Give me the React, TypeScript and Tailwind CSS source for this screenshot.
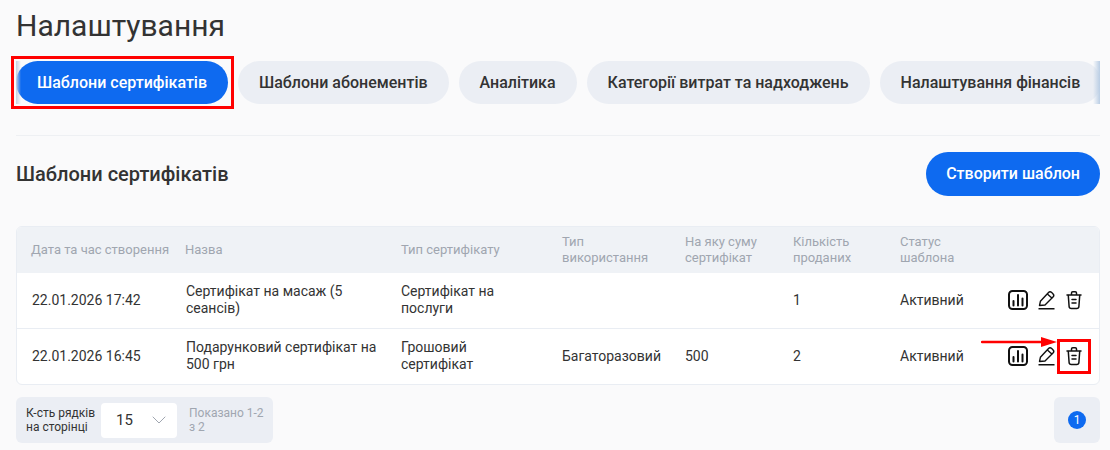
import { ChevronDown } from "lucide-react";

const TABS = [
  "Шаблони сертифікатів",
  "Шаблони абонементів",
  "Аналітика",
  "Категорії витрат та надходжень",
  "Налаштування фінансів",
];

const COLS = [
  { title: "Дата та час створення", w: "w-[154px]", nowrap: true },
  { title: "Назва", w: "w-[216px]" },
  { title: "Тип сертифікату", w: "w-[161px]" },
  { title: "Тип використання", w: "w-[123px]" },
  { title: "На яку суму сертифікат", w: "w-[108px]" },
  { title: "Кількість проданих", w: "w-[107px]" },
  { title: "Статус шаблона", w: "w-[108px]" },
  { title: "", w: "w-[107px]" },
];

const ROWS = [
  ["22.01.2026 17:42", "Сертифікат на масаж (5 сеансів)", "Сертифікат на послуги", "", "", "1", "Активний"],
  ["22.01.2026 16:45", "Подарунковий сертифікат на 500 грн", "Грошовий сертифікат", "Багаторазовий", "500", "2", "Активний"],
];

function ChartIcon() {
  return (
    <svg width="20" height="20" viewBox="0 0 20 20" fill="none" stroke="#111" strokeWidth="2" strokeLinecap="round">
      <rect x="1" y="1" width="18" height="18" rx="3.5" />
      <path d="M5.500 11v4.500M10 5v10.500M14.500 8.500v7" />
    </svg>
  );
}

function PencilIcon() {
  return (
    <svg width="18" height="20" viewBox="0 0 18 20" fill="none" stroke="#111" strokeWidth="1.4" strokeLinejoin="round">
      <path d="M1.500 15.500l.9-4.200L10.300 2.700c.9-.9 2.400-1 3.400-.1l1.200 1.100c1 .9 1 2.400.1 3.400L7 15z" />
      <path d="M9.300 3.900l4.900 4.400" />
      <path d="M0.500 18.800h16" strokeWidth="1.500" />
    </svg>
  );
}

function TrashIcon() {
  return (
    <svg width="16" height="20" viewBox="0 0 16 20" fill="none" stroke="#111" strokeWidth="1.500" strokeLinecap="round" strokeLinejoin="round">
      <path d="M1 5h14M5.500 4.500V3c0-.8.6-1.300 1.300-1.300h2.400c.7 0 1.300.5 1.300 1.300v1.500" />
      <path d="M2.300 5.500l.8 11c.1 1.200 1 2 2.200 2h5.400c1.200 0 2.100-.8 2.200-2l.8-11" />
      <path d="M6 9.500h4M6 13h4" />
    </svg>
  );
}

export default function App() {
  return (
    <div className="relative w-[1110px] h-[450px] overflow-hidden bg-[#fafafb] pl-4 pr-2.5 font-['Roboto',sans-serif] text-[#333]">
      <h1 className="h-[61px] pt-[6px] text-[30px] leading-[40px] font-normal">Налаштування</h1>

      {/* Tabs */}
      <div className="relative overflow-hidden">
        <div className="flex gap-2.5 w-max">
          {TABS.map((tab, i) => (
            <button
              key={tab}
              className={
                i === 0
                  ? "h-[43px] px-[21px] rounded-full bg-[#0e6af0] text-white text-base font-medium whitespace-nowrap"
                  : "h-[43px] px-[21px] rounded-full bg-[#ebeef4] text-[#333] text-base font-medium whitespace-nowrap"
              }
            >
              {tab}
            </button>
          ))}
        </div>
        <div className="absolute left-0 top-0 bottom-0 w-[5px] bg-gradient-to-r from-[#c5d0df] to-transparent" />
        <div className="absolute right-0 top-0 bottom-0 w-[7px] bg-gradient-to-l from-[#b9cde4] to-transparent" />
      </div>

      <div className="mt-[31px] border-t border-[#eef0f3]" />

      <div className="flex items-center justify-between mt-4 h-[44px]">
        <h2 className="text-[20px] font-medium">Шаблони сертифікатів</h2>
        <button className="h-[44px] px-5 rounded-full bg-[#0e6af0] text-white text-base font-medium">Створити шаблон</button>
      </div>

      {/* Table */}
      <div className="mt-[30px] rounded-md border border-[#e9edf3] overflow-hidden bg-white">
        <table className="table-fixed w-full border-collapse text-sm">
          <thead>
            <tr className="h-[46px] bg-[#eff2f6]">
              {COLS.map((col) => (
                <th
                  key={col.title}
                  className={
                    col.nowrap
                      ? `${col.w} pl-[14px] text-left text-[13px] leading-[16px] font-normal text-[#a0a6b0] whitespace-nowrap`
                      : `${col.w} pl-[14px] pr-2 text-left text-[13px] leading-[16px] font-normal text-[#a0a6b0]`
                  }
                >
                  {col.title}
                </th>
              ))}
            </tr>
          </thead>
          <tbody>
            {ROWS.map((row, r) => (
              <tr key={r} className={r === 0 ? "h-[55px] border-b border-[#e9edf3]" : "h-[56px]"}>
                {row.map((cell, c) => (
                  <td key={c} className={c <= 1 ? "pl-[15px] pr-2 leading-[17px]" : "pl-[14px] pr-2 leading-[17px]"}>
                    {cell}
                  </td>
                ))}
                <td className="pl-[14px]">
                  <div className="flex items-center gap-2.5">
                    <ChartIcon />
                    <PencilIcon />
                    <TrashIcon />
                  </div>
                </td>
              </tr>
            ))}
          </tbody>
        </table>
      </div>

      {/* Pagination */}
      <div className="flex items-start justify-between mt-3">
        <div className="flex items-center h-[46px] w-[257px] rounded-md bg-[#ebeef4] pl-2.5 text-xs leading-[14px]">
          <span className="w-[75px]">К-сть рядків на сторінці</span>
          <div className="flex items-center justify-between w-[76px] h-[35px] rounded bg-white pl-[15px] pr-1.5 text-[15px]">
            15
            <ChevronDown size={24} strokeWidth={1} className="text-[#a0a6b0]" />
          </div>
          <span className="w-[92px] pl-3 text-[#a0a6b0]">Показано 1-2 з 2</span>
        </div>
        <div className="flex items-center justify-center w-[46px] h-[46px] rounded-md bg-[#ebeef4]">
          <span className="flex items-center justify-center w-[18px] h-[18px] rounded-full bg-[#0e6af0] text-white text-xs">1</span>
        </div>
      </div>

      {/* Annotations */}
      <div className="absolute left-[11px] top-[56px] w-[223px] h-[53px] border-[3px] border-[#ff0000]" />
      <div className="absolute left-[1057px] top-[339px] w-[34px] h-[35px] border-[3px] border-[#ff0000]" />
      <svg className="absolute left-[981px] top-[335px]" width="78" height="14" viewBox="0 0 78 14">
        <path d="M1 7h62" stroke="#ff0000" strokeWidth="2.500" strokeLinecap="round" />
        <path d="M60 2l16 5-16 5z" fill="#ff0000" />
      </svg>
    </div>
  );
}
